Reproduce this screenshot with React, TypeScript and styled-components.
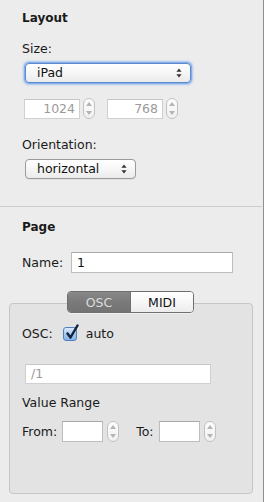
import React from "react";
import styled, { createGlobalStyle } from "styled-components";

const Global = createGlobalStyle`
  html, body { margin: 0; padding: 0; background: #ececec; }
  * { box-sizing: border-box; }
`;

const Panel = styled.div`
  width: 264px;
  height: 502px;
  background: #ececec;
  border-right: 1px solid #8f8f8f;
  font-family: "DejaVu Sans", "Liberation Sans", sans-serif;
  font-size: 12.5px;
  color: #1a1a1a;
  display: flex;
  flex-direction: column;
  overflow: hidden;
`;

const LayoutSection = styled.section`
  display: flex;
  flex-direction: column;
  align-items: flex-start;
  padding: 10px 0 27px 22px;
  border-bottom: 1px solid #cbcbcb;
  margin-right: 1px;
`;

const PageSection = styled.section`
  display: flex;
  flex-direction: column;
  align-items: flex-start;
  padding: 12px 10px 0 9px;
`;

const Heading = styled.div<{ $indent?: number }>`
  font-weight: bold;
  font-size: 12px;
  line-height: 16px;
  margin-left: ${(p) => p.$indent ?? 0}px;
`;

const Label = styled.div<{ $top: number }>`
  line-height: 16px;
  margin-top: ${(p) => p.$top}px;
`;

const PopupButton = styled.div<{ $width: number; $top: number; $focused?: boolean }>`
  margin-top: ${(p) => p.$top}px;
  margin-left: 3px;
  width: ${(p) => p.$width}px;
  height: 20px;
  border: 1px solid ${(p) => (p.$focused ? "#5a8ad0" : "#9a9a9a")};
  border-radius: 4px;
  background: linear-gradient(#ffffff, #f6f6f6 50%, #ebebeb);
  box-shadow: ${(p) =>
    p.$focused
      ? "0 0 0 1px #86aee6, 0 0 2px 2px #a9c6ef"
      : "0 1px 0 rgba(0,0,0,0.05)"};
  display: flex;
  align-items: center;
  justify-content: space-between;
  padding: 0 8px 0 11px;
  line-height: 16px;
  color: #111;
`;

const RowBase = styled.div<{ $top: number; $left?: number }>`
  display: flex;
  align-items: center;
  margin-top: ${(p) => p.$top}px;
  margin-left: ${(p) => p.$left ?? 0}px;
`;

const TextField = styled.div<{
  $width: number;
  $height?: number;
  $disabled?: boolean;
  $align?: "left" | "right";
  $ml?: number;
}>`
  width: ${(p) => p.$width}px;
  height: ${(p) => p.$height ?? 20}px;
  margin-left: ${(p) => p.$ml ?? 0}px;
  background: #fff;
  border: 1px solid ${(p) => (p.$disabled ? "#d0d0d0" : "#bdbdbd")};
  border-top-color: ${(p) => (p.$disabled ? "#c6c6c6" : "#a9a9a9")};
  color: ${(p) => (p.$disabled ? "#9a9a9a" : "#111")};
  display: flex;
  align-items: center;
  justify-content: ${(p) => (p.$align === "right" ? "flex-end" : "flex-start")};
  padding: 0 4px 0 5px;
  line-height: 16px;
`;

const StepperBox = styled.div<{ $ml: number }>`
  margin-left: ${(p) => p.$ml}px;
  width: 12px;
  height: 21px;
  border: 1px solid #c2c2c2;
  border-radius: 6px;
  background: linear-gradient(#fdfdfd, #f0f0f0);
  display: flex;
  flex-direction: column;
  align-items: center;
  justify-content: center;
  gap: 5px;
`;

const GroupBox = styled.div`
  position: relative;
  margin-top: 30px;
  width: 244px;
  height: 191px;
  border: 1px solid #c6c6c6;
  border-radius: 4px;
  background: #e3e3e3;
  padding: 22px 0 0 12px;
  display: flex;
  flex-direction: column;
  align-items: flex-start;
`;

const Segmented = styled.div`
  position: absolute;
  top: -13px;
  left: 57px;
  display: flex;
  height: 22px;
  border: 1px solid #6f6f6f;
  border-radius: 4px;
  overflow: hidden;
  box-shadow: 0 1px 0 rgba(255,255,255,0.5);
`;

const Segment = styled.div<{ $selected?: boolean; $width: number }>`
  width: ${(p) => p.$width}px;
  display: flex;
  align-items: center;
  justify-content: center;
  font-size: 12.5px;
  background: ${(p) =>
    p.$selected
      ? "linear-gradient(#888888, #7a7a7a 50%, #737373)"
      : "linear-gradient(#ffffff, #f7f7f7 50%, #ececec)"};
  color: ${(p) => (p.$selected ? "#dcdcdc" : "#111")};
  & + & {
    border-left: 1px solid #6f6f6f;
  }
`;

const Check = styled.div`
  width: 14px;
  height: 14px;
  margin-left: 10px;
  position: relative;
  border: 1px solid #5580be;
  border-radius: 3px;
  background: linear-gradient(#dbe9fb, #a9c9ef 50%, #86b2e8);
`;

const CheckMark = styled.svg`
  position: absolute;
  left: 1px;
  top: -4px;
`;

const CheckLabel = styled.span`
  margin-left: 9px;
  line-height: 16px;
`;

const InlineLabel = styled.span<{ $ml?: number }>`
  margin-left: ${(p) => p.$ml ?? 0}px;
  line-height: 16px;
`;

const Arrows = () => (
  <svg width="6" height="10" viewBox="0 0 6 10">
    <path d="M3 0.5 L5.6 3.8 H0.4 Z" fill="#333" />
    <path d="M3 9.5 L5.6 6.2 H0.4 Z" fill="#333" />
  </svg>
);

const Stepper = ({ ml }: { ml: number }) => (
  <StepperBox $ml={ml}>
    <svg width="6" height="4" viewBox="0 0 6 4">
      <path d="M3 0 L6 4 H0 Z" fill="#b4b4b4" />
    </svg>
    <svg width="6" height="4" viewBox="0 0 6 4">
      <path d="M3 4 L6 0 H0 Z" fill="#b4b4b4" />
    </svg>
  </StepperBox>
);

export default function App() {
  return (
    <>
      <Global />
      <Panel>
        <LayoutSection>
          <Heading>Layout</Heading>
          <Label $top={15}>Size:</Label>
          <PopupButton $width={166} $top={6} $focused>
            <span>iPad</span>
            <Arrows />
          </PopupButton>
          <RowBase $top={15} $left={2}>
            <TextField $width={56} $disabled $align="right">1024</TextField>
            <Stepper ml={3} />
            <TextField $width={56} $disabled $align="right" $ml={12}>768</TextField>
            <Stepper ml={3} />
          </RowBase>
          <Label $top={18}>Orientation:</Label>
          <PopupButton $width={111} $top={6}>
            <span>horizontal</span>
            <Arrows />
          </PopupButton>
        </LayoutSection>
        <PageSection>
          <Heading $indent={13}>Page</Heading>
          <RowBase $top={17} $left={13}>
            <InlineLabel>Name:</InlineLabel>
            <TextField $width={162} $height={21} $ml={8}>1</TextField>
          </RowBase>
          <GroupBox>
            <Segmented>
              <Segment $selected $width={62}>OSC</Segment>
              <Segment $width={63}>MIDI</Segment>
            </Segmented>
            <RowBase $top={0}>
              <InlineLabel>OSC:</InlineLabel>
              <Check>
                <CheckMark width="14" height="16" viewBox="0 0 14 16">
                  <path
                    d="M2.5 9.5 L5.5 13.5 L12.5 1.5"
                    stroke="#12213d"
                    strokeWidth="2.4"
                    fill="none"
                    strokeLinecap="round"
                    strokeLinejoin="round"
                  />
                </CheckMark>
              </Check>
              <CheckLabel>auto</CheckLabel>
            </RowBase>
            <RowBase $top={22} $left={3}>
              <TextField $width={186} $disabled>/1</TextField>
            </RowBase>
            <Label $top={11}>Value Range</Label>
            <RowBase $top={10}>
              <InlineLabel>From:</InlineLabel>
              <TextField $width={41} $height={21} $ml={5} />
              <Stepper ml={4} />
              <InlineLabel $ml={17}>To:</InlineLabel>
              <TextField $width={41} $height={21} $ml={5} />
              <Stepper ml={4} />
            </RowBase>
          </GroupBox>
        </PageSection>
      </Panel>
    </>
  );
}
